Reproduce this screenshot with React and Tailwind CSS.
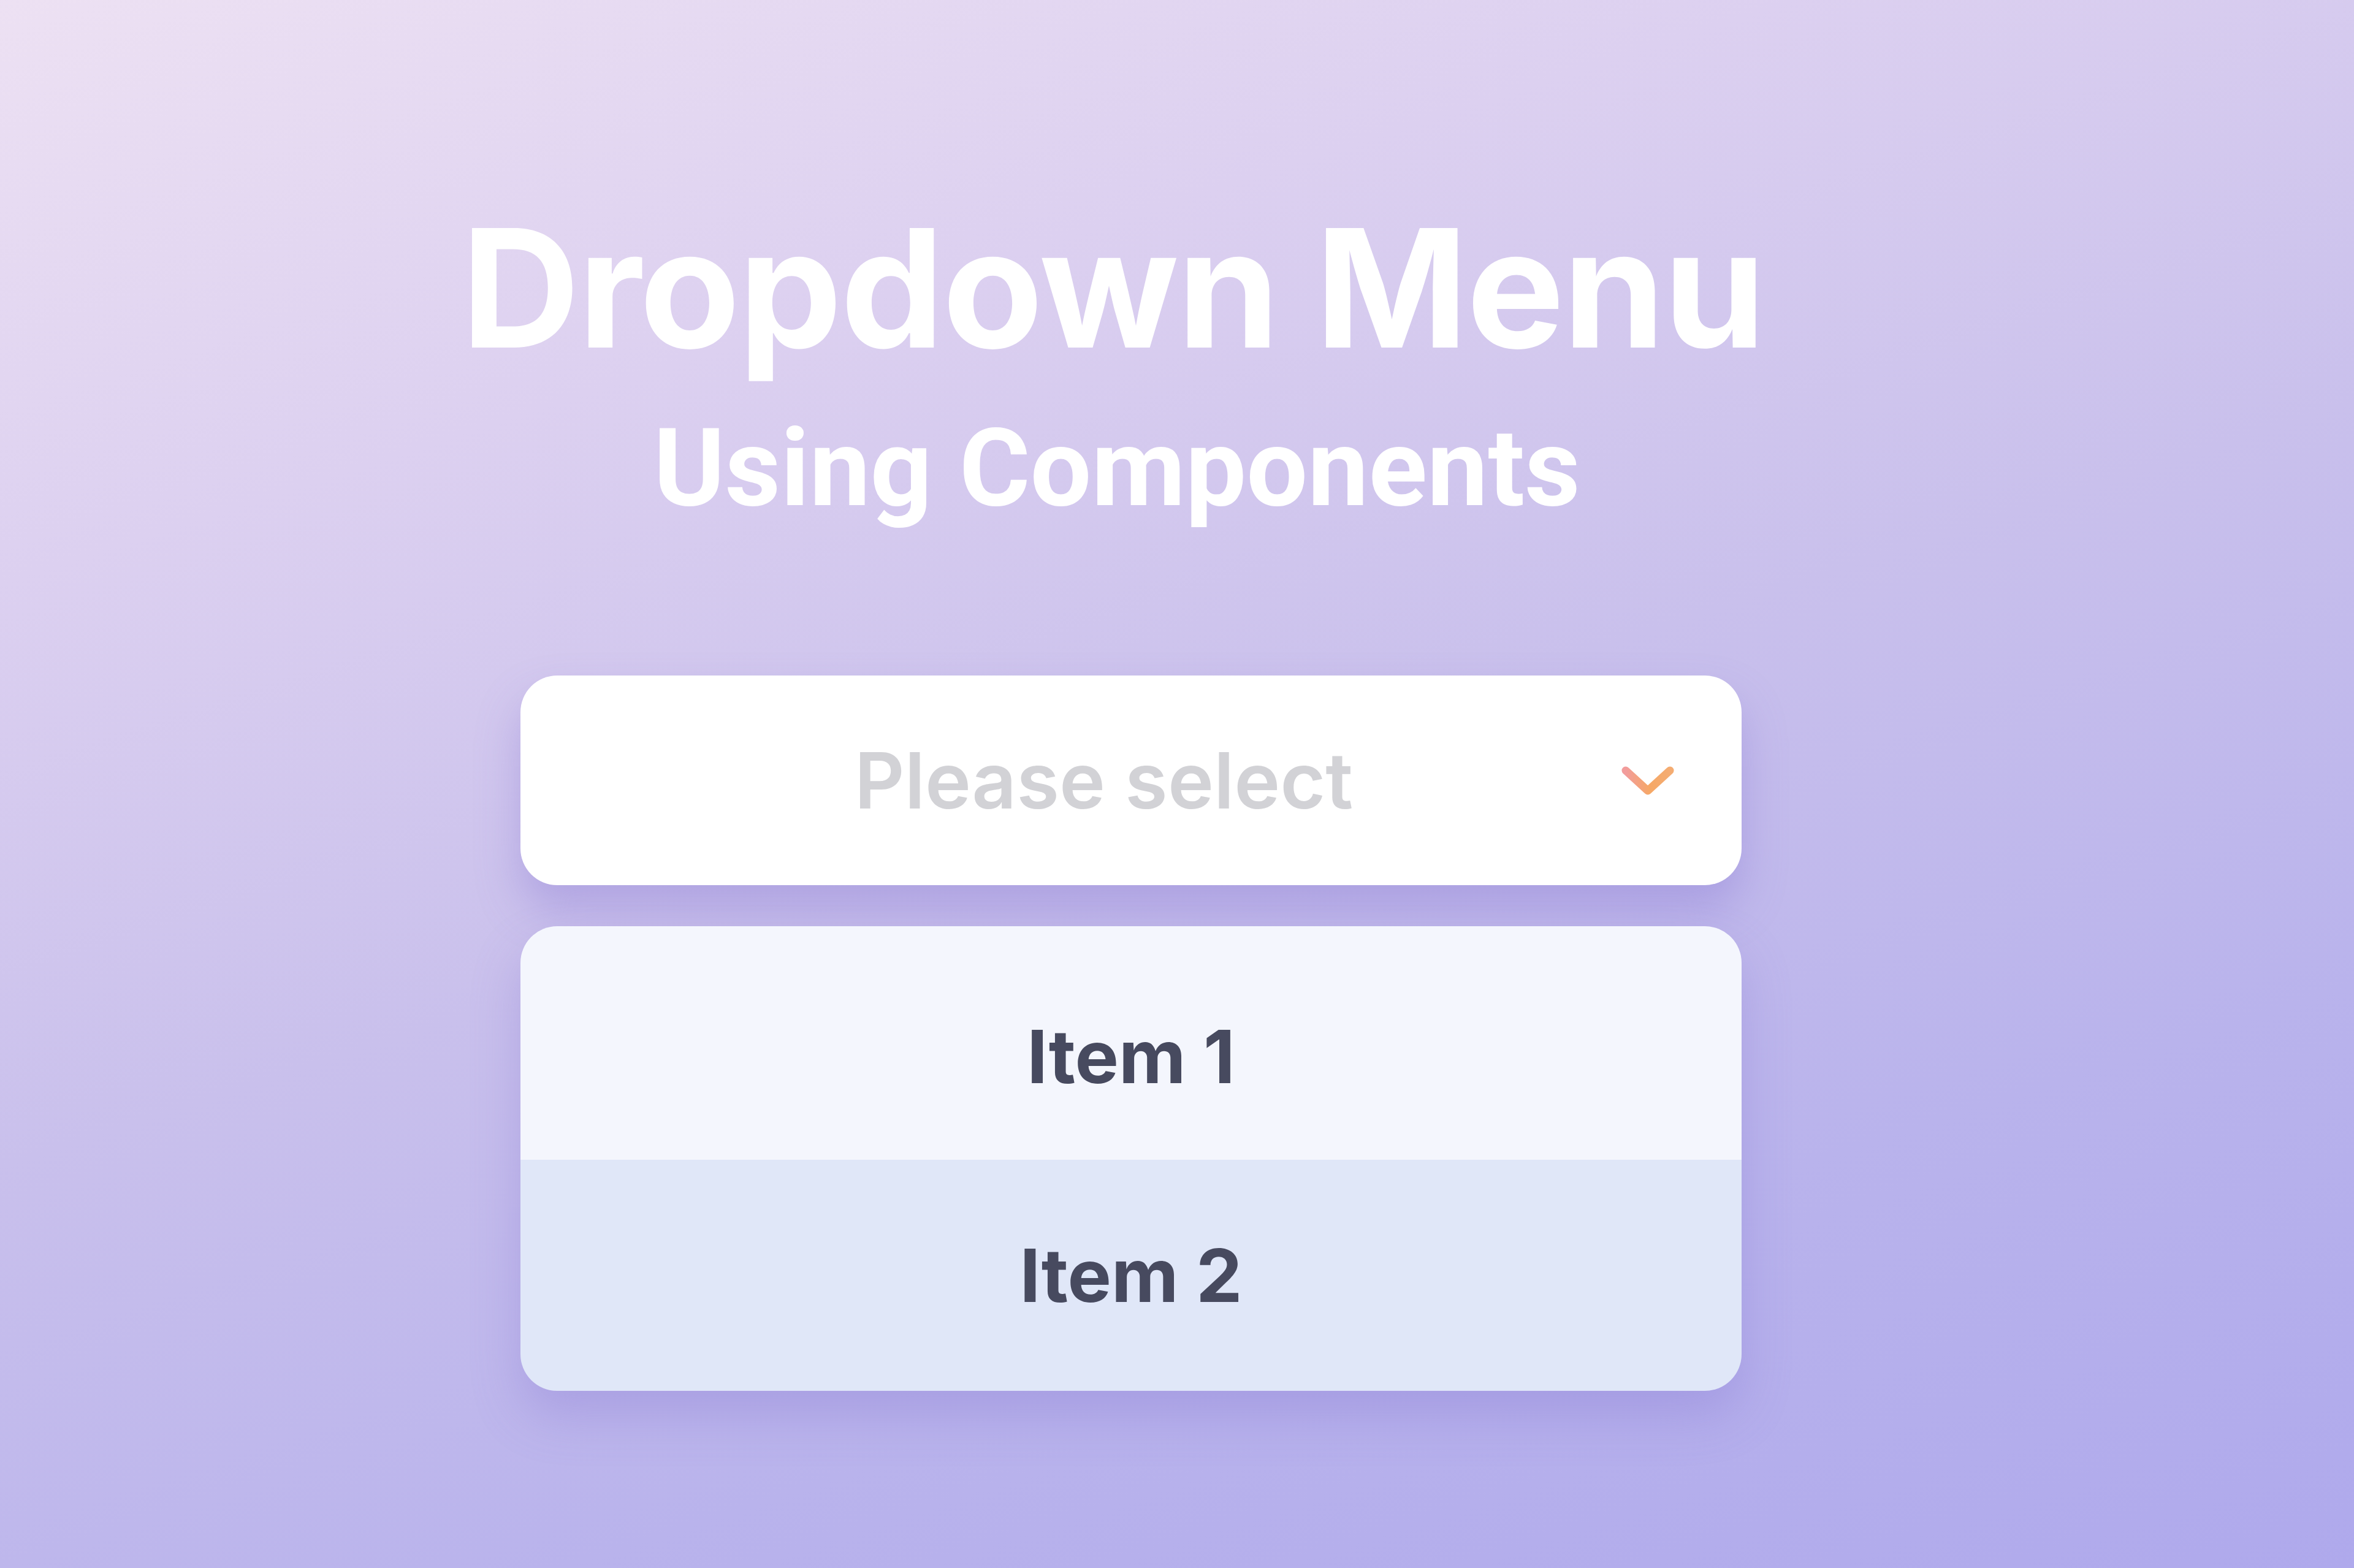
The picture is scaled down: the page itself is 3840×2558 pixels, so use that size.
const ITEMS = [
  { label: 'Item 1', className: 'h-[381px] bg-[#f4f6fd] pt-[44px]' },
  { label: 'Item 2', className: 'h-[377px] bg-[#e0e7f8]' },
];

const label = "font-['Inter',sans-serif] leading-none [font-optical-sizing:none]";

function Chevron() {
  return (
    <svg width="88" height="50" viewBox="0 0 88 50" fill="none">
      <defs>
        <linearGradient id="chev" x1="0" y1="0" x2="1" y2="0">
          <stop offset="0%" stopColor="#f29c9c" />
          <stop offset="55%" stopColor="#f6a866" />
          <stop offset="100%" stopColor="#f4ac72" />
        </linearGradient>
      </defs>
      <polyline
        points="8,9 44,42 80,9"
        stroke="url(#chev)"
        strokeWidth="13"
        strokeLinecap="round"
        strokeLinejoin="round"
      />
    </svg>
  );
}

export default function App() {
  return (
    <div className="h-[2558px] w-full overflow-hidden bg-[linear-gradient(162deg,#ede1f3_0%,#dcd0f0_25%,#c9c0ec_50%,#b9b3ec_75%,#afa9ec_100%)]">
      <div className="pl-[849px] pt-[336px]">
        <div className="flex w-[1992px] flex-col items-center">
          <h1 className="whitespace-nowrap pr-[60px] font-['Inter',sans-serif] text-[268px] font-bold leading-none tracking-[-0.01em] text-white [font-optical-sizing:none]">
            Dropdown Menu
          </h1>
          <h2 className="mt-[71px] whitespace-nowrap pr-[46px] font-['Roboto',sans-serif] text-[177px] font-bold leading-none text-white">
            Using Components
          </h2>

          {/* select trigger */}
          <div className="mt-[250px] flex h-[342px] w-full items-center rounded-[60px] bg-white pl-[108px] pr-[109px] shadow-[0_40px_70px_rgba(125,110,205,0.35)]">
            <span className={`${label} flex-1 text-center text-[127px] font-semibold text-[#d2d2d6]`}>
              Please select
            </span>
            <Chevron />
          </div>

          {/* open menu */}
          <div className="mt-[67px] w-full overflow-hidden rounded-[60px] shadow-[0_40px_80px_rgba(125,110,205,0.3)]">
            {ITEMS.map((item) => (
              <div
                key={item.label}
                className={`flex items-center justify-center ${item.className}`}
              >
                <span className={`${label} text-[120px] font-bold text-[#474a5f]`}>
                  {item.label}
                </span>
              </div>
            ))}
          </div>
        </div>
      </div>
    </div>
  );
}
